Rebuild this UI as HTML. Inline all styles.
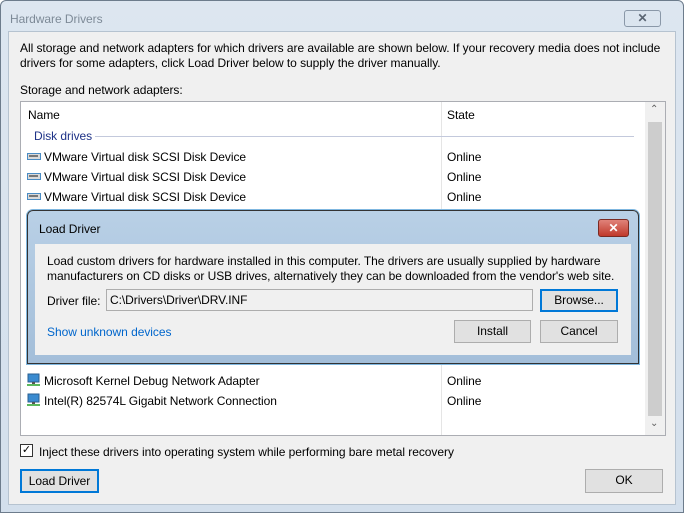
<!DOCTYPE html>
<html><head><style>
*{box-sizing:border-box;margin:0;padding:0}
body{width:684px;height:513px;overflow:hidden;background:#fff;font-family:"Liberation Sans",sans-serif;font-size:12px;color:#000;position:relative;letter-spacing:-0.05px}
.abs{position:absolute}
.win{left:0;top:0;width:684px;height:513px;background:linear-gradient(#dde6f0,#d3dfec);border:1px solid #6d7c8c;border-radius:6px 6px 0 0}
.content{left:8px;top:31px;width:668px;height:474px;background:#f0f0f0;border:1px solid #b6c3d0}
.t{position:absolute;white-space:nowrap}
.btn{position:absolute;background:#e1e1e1;border:1px solid #adadad;text-align:center;line-height:20px}
.list{left:20px;top:101px;width:646px;height:335px;background:#fff;border:1px solid #abadb3}
.ico{position:absolute;width:14px;height:7px;border:1.5px solid #4a8cc4;background:#d9d9d9}
.ico:after{content:"";position:absolute;left:1px;top:1px;width:9px;height:2px;background:#777}
.net{position:absolute;width:13px;height:14px}
</style></head><body>
<div class="abs win"></div>
<div class="t" style="left:10px;top:12px;color:#7d8a97;font-size:12px">Hardware Drivers</div>
<div class="abs" style="left:624px;top:10px;width:37px;height:17px;border:1px solid #8a98a8;border-radius:3px;background:#dbe5ef;text-align:center;line-height:14px;color:#5a6573;font-size:12px;font-weight:bold">✕</div>
<div class="abs content"></div>
<div class="t" style="left:20px;top:41px">All storage and network adapters for which drivers are available are shown below. If your recovery media does not include</div>
<div class="t" style="left:20px;top:56px">drivers for some adapters, click Load Driver below to supply the driver manually.</div>
<div class="t" style="left:20px;top:83px">Storage and network adapters:</div>
<div class="abs list">
 <div class="t" style="left:7px;top:6px">Name</div>
 <div class="t" style="left:426px;top:6px">State</div>
 <div class="abs" style="left:420px;top:0;width:1px;height:333px;background:#e5e5e5"></div>
 <div class="t" style="left:13px;top:27px;color:#1e3287">Disk drives</div>
 <div class="abs" style="left:74px;top:34px;width:539px;height:1px;background:#c3c9dc"></div>
 <div class="ico" style="left:6px;top:51px"></div><div class="t" style="left:23px;top:48px">VMware Virtual disk SCSI Disk Device</div><div class="t" style="left:426px;top:48px">Online</div>
 <div class="ico" style="left:6px;top:71px"></div><div class="t" style="left:23px;top:68px">VMware Virtual disk SCSI Disk Device</div><div class="t" style="left:426px;top:68px">Online</div>
 <div class="ico" style="left:6px;top:91px"></div><div class="t" style="left:23px;top:88px">VMware Virtual disk SCSI Disk Device</div><div class="t" style="left:426px;top:88px">Online</div>
 <svg class="net" style="left:6px;top:271px" viewBox="0 0 13 14"><rect x="1" y="1" width="11" height="8" fill="#3a8bd0" stroke="#2a5f90"/><rect x="5" y="9" width="3" height="2" fill="#555"/><rect x="0" y="11" width="13" height="2" fill="#5cb85c"/></svg>
 <div class="t" style="left:23px;top:272px">Microsoft Kernel Debug Network Adapter</div><div class="t" style="left:426px;top:272px">Online</div>
 <svg class="net" style="left:6px;top:291px" viewBox="0 0 13 14"><rect x="1" y="1" width="11" height="8" fill="#3a8bd0" stroke="#2a5f90"/><rect x="5" y="9" width="3" height="2" fill="#555"/><rect x="0" y="11" width="13" height="2" fill="#5cb85c"/></svg>
 <div class="t" style="left:23px;top:292px">Intel(R) 82574L Gigabit Network Connection</div><div class="t" style="left:426px;top:292px">Online</div>
 <div class="abs" style="left:624px;top:0;width:20px;height:333px;background:#f0f0f0"></div>
 <div class="abs" style="left:627px;top:20px;width:14px;height:294px;background:#cdcdcd"></div>
 <div class="t" style="left:629px;top:2px;color:#606060;font-size:10px">⌃</div>
 <div class="t" style="left:629px;top:316px;color:#606060;font-size:10px">⌄</div>
</div>
<!-- Load Driver dialog -->
<div class="abs" style="left:27px;top:210px;width:612px;height:154px;background:linear-gradient(#b9d0e6,#a3bed9);border:1px solid #333;border-radius:6px 6px 0 0;box-shadow:0 0 0 1px #7fb7e0"></div>
<div class="t" style="left:39px;top:222px">Load Driver</div>
<div class="abs" style="left:598px;top:219px;width:31px;height:18px;background:linear-gradient(#e0837a,#c0392b);border:1px solid #7a2a22;border-radius:3px;color:#fff;text-align:center;line-height:16px;font-weight:bold;font-size:12px">✕</div>
<div class="abs" style="left:35px;top:244px;width:596px;height:111px;background:#f0f0f0"></div>
<div class="t" style="left:47px;top:254px">Load custom drivers for hardware installed in this computer. The drivers are usually supplied by hardware</div>
<div class="t" style="left:47px;top:269px">manufacturers on CD disks or USB drives, alternatively they can be downloaded from the vendor's web site.</div>
<div class="t" style="left:47px;top:294px">Driver file:</div>
<div class="abs" style="left:106px;top:289px;width:427px;height:22px;background:#f0f0f0;border:1px solid #adadad"></div>
<div class="t" style="left:110px;top:293px">C:\Drivers\Driver\DRV.INF</div>
<div class="btn" style="left:540px;top:289px;width:78px;height:23px;border:2px solid #0078d7;line-height:19px">Browse...</div>
<div class="t" style="left:47px;top:325px;color:#0066cc">Show unknown devices</div>
<div class="btn" style="left:454px;top:320px;width:77px;height:23px">Install</div>
<div class="btn" style="left:540px;top:320px;width:78px;height:23px">Cancel</div>
<!-- bottom -->
<div class="abs" style="left:20px;top:444px;width:13px;height:13px;border:1px solid #333;background:#fff;font-size:11px;line-height:11px;text-align:center">✓</div>
<div class="t" style="left:39px;top:445px">Inject these drivers into operating system while performing bare metal recovery</div>
<div class="btn" style="left:20px;top:469px;width:79px;height:24px;border:2px solid #0078d7">Load Driver</div>
<div class="btn" style="left:585px;top:469px;width:78px;height:24px">OK</div>
</body></html>
